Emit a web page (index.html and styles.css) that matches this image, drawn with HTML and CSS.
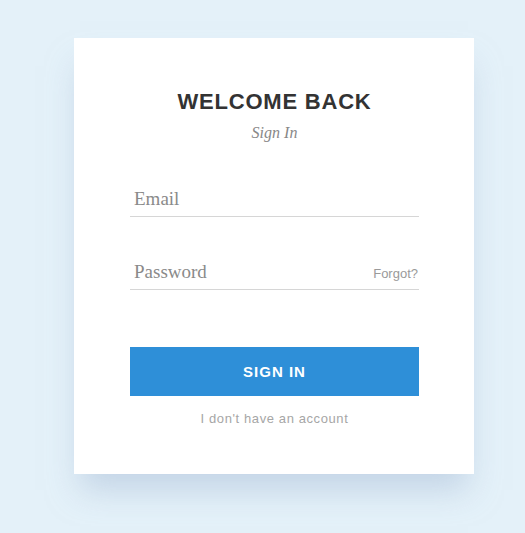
FILE: index.html
```html
<!DOCTYPE html>
<html>
<head>
<meta charset="utf-8">
<link rel="stylesheet" href="styles.css">
</head>
<body>
<div class="page">
  <form class="card">
    <h1 class="title">WELCOME BACK</h1>
    <p class="subtitle">Sign In</p>
    <div class="field">
      <span class="label">Email</span>
    </div>
    <div class="field field-pass">
      <span class="label">Password</span>
      <a class="forgot">Forgot?</a>
    </div>
    <button type="button" class="btn">SIGN IN</button>
    <a class="noacc">I don't have an account</a>
  </form>
</div>
</body>
</html>
```

FILE: styles.css
```css
html, body {
  margin: 0;
  padding: 0;
  background: #e4f1f9;
}
.page {
  width: 525px;
  height: 533px;
  padding: 38px 0 0 74px;
  box-sizing: border-box;
}
.card {
  width: 400px;
  height: 436px;
  background: #fff;
  box-sizing: border-box;
  padding: 51px 55px 0 56px;
  display: flex;
  flex-direction: column;
  box-shadow: 0 22px 30px -6px rgba(170, 190, 215, 0.55);
}
.title {
  margin: 0;
  font-family: "Liberation Sans", Arial, sans-serif;
  font-weight: bold;
  font-size: 22px;
  line-height: 26px;
  letter-spacing: 0.8px;
  color: #333;
  text-align: center;
}
.subtitle {
  margin: 8px 0 0;
  font-family: "Liberation Serif", serif;
  font-style: italic;
  font-size: 16px;
  line-height: 20px;
  color: #888;
  text-align: center;
}
.field {
  margin-top: 30px;
  height: 44px;
  border-bottom: 1px solid #d6d6d6;
  display: flex;
  align-items: flex-end;
  justify-content: space-between;
  padding: 0 1px 6px 4px;
  box-sizing: border-box;
  line-height: 22px;
}
.field-pass {
  margin-top: 29px;
}
.label {
  font-family: "Liberation Serif", serif;
  font-size: 19px;
  color: #8a8a8a;
}
.forgot {
  font-family: "Liberation Sans", Arial, sans-serif;
  font-size: 13px;
  color: #9a9a9a;
  line-height: 18px;
}
.btn {
  margin-top: 57px;
  height: 49px;
  border: none;
  background: #2e8fd8;
  color: #fff;
  font-family: "Liberation Sans", Arial, sans-serif;
  font-weight: bold;
  font-size: 15px;
  letter-spacing: 1px;
  padding: 0;
}
.noacc {
  margin-top: 15px;
  text-align: center;
  font-family: "Liberation Sans", Arial, sans-serif;
  font-size: 13px;
  letter-spacing: 0.6px;
  color: #a6a6a6;
}
```
